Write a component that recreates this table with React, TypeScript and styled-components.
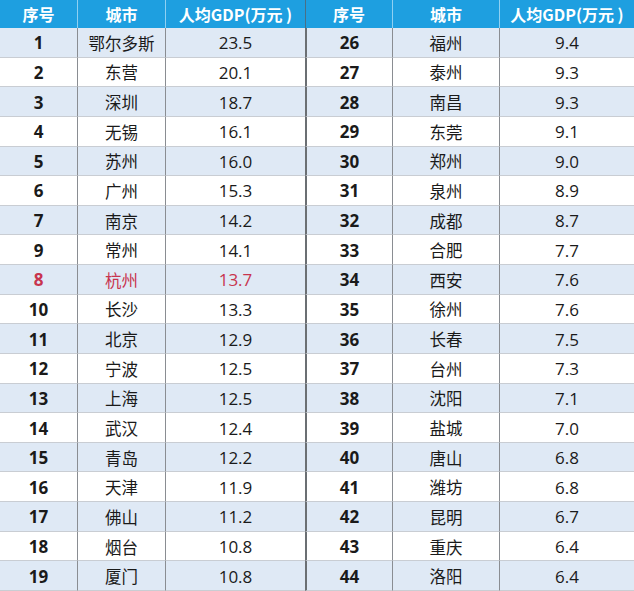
import styled, { createGlobalStyle } from "styled-components";

type Row = { no: number; city: string; gdp: string; hot?: boolean };

const left: Row[] = [
	{ no: 1, city: "鄂尔多斯", gdp: "23.5" },
	{ no: 2, city: "东营", gdp: "20.1" },
	{ no: 3, city: "深圳", gdp: "18.7" },
	{ no: 4, city: "无锡", gdp: "16.1" },
	{ no: 5, city: "苏州", gdp: "16.0" },
	{ no: 6, city: "广州", gdp: "15.3" },
	{ no: 7, city: "南京", gdp: "14.2" },
	{ no: 9, city: "常州", gdp: "14.1" },
	{ no: 8, city: "杭州", gdp: "13.7", hot: true },
	{ no: 10, city: "长沙", gdp: "13.3" },
	{ no: 11, city: "北京", gdp: "12.9" },
	{ no: 12, city: "宁波", gdp: "12.5" },
	{ no: 13, city: "上海", gdp: "12.5" },
	{ no: 14, city: "武汉", gdp: "12.4" },
	{ no: 15, city: "青岛", gdp: "12.2" },
	{ no: 16, city: "天津", gdp: "11.9" },
	{ no: 17, city: "佛山", gdp: "11.2" },
	{ no: 18, city: "烟台", gdp: "10.8" },
	{ no: 19, city: "厦门", gdp: "10.8" },
];

const right: Row[] = [
	{ no: 26, city: "福州", gdp: "9.4" },
	{ no: 27, city: "泰州", gdp: "9.3" },
	{ no: 28, city: "南昌", gdp: "9.3" },
	{ no: 29, city: "东莞", gdp: "9.1" },
	{ no: 30, city: "郑州", gdp: "9.0" },
	{ no: 31, city: "泉州", gdp: "8.9" },
	{ no: 32, city: "成都", gdp: "8.7" },
	{ no: 33, city: "合肥", gdp: "7.7" },
	{ no: 34, city: "西安", gdp: "7.6" },
	{ no: 35, city: "徐州", gdp: "7.6" },
	{ no: 36, city: "长春", gdp: "7.5" },
	{ no: 37, city: "台州", gdp: "7.3" },
	{ no: 38, city: "沈阳", gdp: "7.1" },
	{ no: 39, city: "盐城", gdp: "7.0" },
	{ no: 40, city: "唐山", gdp: "6.8" },
	{ no: 41, city: "潍坊", gdp: "6.8" },
	{ no: 42, city: "昆明", gdp: "6.7" },
	{ no: 43, city: "重庆", gdp: "6.4" },
	{ no: 44, city: "洛阳", gdp: "6.4" },
];

const GlobalStyle = createGlobalStyle`
	html, body {
		margin: 0;
		padding: 0;
		background: #ffffff;
	}
	body {
		font-family: "Noto Sans CJK SC", "Noto Sans", sans-serif;
	}
`;

const Grid = styled.div`
	width: 634px;
	height: 591px;
	display: grid;
	grid-template-columns: 77px 88px 140px 87px 107px 135px;
	grid-template-rows: 28px repeat(19, 1fr);
	overflow: hidden;
`;

const Head = styled.div<{ $split?: boolean }>`
	background: #1e9fe0;
	color: #ffffff;
	font-weight: 700;
	font-size: 16px;
	display: flex;
	align-items: center;
	justify-content: center;
	border-left: 1px solid ${(p) => (p.$split ? "#4a6f86" : "#8fd0f2")};
	&:first-child {
		border-left: none;
	}
`;

const Cell = styled.div<{ $shade: boolean; $hot?: boolean; $split?: boolean; $first?: boolean; $kind: "no" | "city" | "gdp" }>`
	background: ${(p) => (p.$shade ? "#dfe9f5" : "#ffffff")};
	color: ${(p) => (p.$hot ? "#c8344e" : "#1a1a1a")};
	display: flex;
	align-items: center;
	justify-content: center;
	border-bottom: 1px solid #c9cdd3;
	border-left: ${(p) => (p.$first ? "none" : p.$split ? "2px solid #6b6f73" : "1px solid #8a8d92")};
	font-size: ${(p) => (p.$kind === "city" ? "16.5px" : "17px")};
	font-weight: ${(p) => (p.$kind === "no" ? 700 : 400)};
	font-family: ${(p) =>
		p.$kind === "city"
			? '"Noto Sans CJK SC", sans-serif'
			: '"Open Sans", "Liberation Sans", sans-serif'};
	padding-top: 1px;
	box-sizing: border-box;
`;

const heads = ["序号", "城市", "人均GDP(万元 )"];

function App() {
	return (
		<>
			<GlobalStyle />
			<Grid>
				{[...heads, ...heads].map((h, i) => (
					<Head key={i} $split={i === 3}>
						{h}
					</Head>
				))}
				{left.map((l, i) => {
					const r = right[i];
					const shade = i % 2 === 0;
					return [
						<Cell key={`a${i}`} $shade={shade} $hot={l.hot} $first $kind="no">{l.no}</Cell>,
						<Cell key={`b${i}`} $shade={shade} $hot={l.hot} $kind="city">{l.city}</Cell>,
						<Cell key={`c${i}`} $shade={shade} $hot={l.hot} $kind="gdp">{l.gdp}</Cell>,
						<Cell key={`d${i}`} $shade={shade} $split $kind="no">{r.no}</Cell>,
						<Cell key={`e${i}`} $shade={shade} $kind="city">{r.city}</Cell>,
						<Cell key={`f${i}`} $shade={shade} $kind="gdp">{r.gdp}</Cell>,
					];
				})}
			</Grid>
		</>
	);
}

export default App;
